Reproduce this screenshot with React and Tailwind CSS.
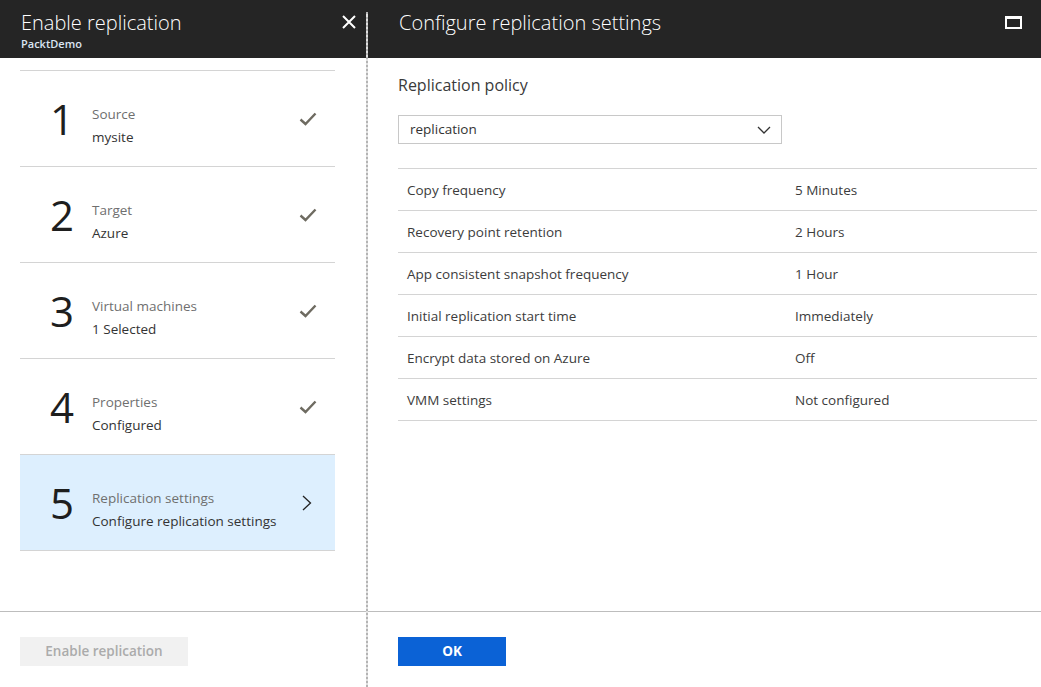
import { useState } from "react";

const steps = [
  { n: "1", title: "Source", sub: "mysite", done: true },
  { n: "2", title: "Target", sub: "Azure", done: true },
  { n: "3", title: "Virtual machines", sub: "1 Selected", done: true },
  { n: "4", title: "Properties", sub: "Configured", done: true },
  { n: "5", title: "Replication settings", sub: "Configure replication settings", done: false },
];

const settings = [
  ["Copy frequency", "5 Minutes"],
  ["Recovery point retention", "2 Hours"],
  ["App consistent snapshot frequency", "1 Hour"],
  ["Initial replication start time", "Immediately"],
  ["Encrypt data stored on Azure", "Off"],
  ["VMM settings", "Not configured"],
];

const font = { fontFamily: '"Open Sans", "Noto Sans", sans-serif' };

function Check() {
  return (
    <svg width="18" height="14" viewBox="0 0 18 14" fill="none">
      <path d="M1.5 7.5 L6.5 12 L16.5 1.5" stroke="#6e6b61" strokeWidth="2.4" />
    </svg>
  );
}

function Chevron() {
  return (
    <svg width="10" height="16" viewBox="0 0 10 16" fill="none">
      <path d="M1 1 L8.5 8 L1 15" stroke="#222" strokeWidth="1.3" />
    </svg>
  );
}

export default function App() {
  const [policy] = useState("replication");

  return (
    <div className="flex h-[687px] w-[1041px] overflow-hidden bg-white text-[#333]" style={font}>
      {/* left blade */}
      <div className="flex w-[366px] shrink-0 flex-col">
        <div className="flex h-[58px] shrink-0 items-start justify-between bg-[#252525] pl-[21px] pr-[10px]">
          <div>
            <div className="mt-[8px] text-[20px] font-light leading-[30px] text-white">Enable replication</div>
            <div className="-mt-[1px] text-[11px] font-semibold leading-[14px] text-[#dbe6f3]">PacktDemo</div>
          </div>
          <svg className="mt-[15px]" width="14" height="14" viewBox="0 0 14 14">
            <path d="M1 1 L13 13 M13 1 L1 13" stroke="#fff" strokeWidth="2" />
          </svg>
        </div>

        <div className="flex-1 px-[20px] pt-[12px]">
          <div className="w-[315px] border-t border-[#d4d4d4]">
            {steps.map((s) => (
              <div
                key={s.n}
                className={`flex h-[96px] items-center border-b border-[#d4d4d4] ${
                  s.done ? "" : "bg-[#ddeffe]"
                }`}
              >
                <div className="w-[72px] pl-[30px] text-[42px] font-normal leading-none text-[#1e1e1e]">{s.n}</div>
                <div className="flex-1 pt-[14px]">
                  <div className="text-[13.5px] leading-[22px] text-[#6f6f6f]">{s.title}</div>
                  <div className="mt-[1px] text-[13.5px] leading-[22px] text-[#333]">{s.sub}</div>
                </div>
                <div className="flex w-[46px] justify-start pl-[10px]">
                  {s.done ? <Check /> : <div className="pl-[3px]"><Chevron /></div>}
                </div>
              </div>
            ))}
          </div>
        </div>

        <div className="h-[76px] shrink-0 border-t border-[#bdbdbd] px-[20px] pt-[25px]">
          <button className="h-[29px] w-[168px] bg-[#f1f1f1] text-[13.5px] font-semibold text-[#ababab]">
            Enable replication
          </button>
        </div>
      </div>

      {/* divider */}
      <div className="flex w-[2px] shrink-0 flex-col">
        <div className="h-[12px] bg-[#252525]" />
        <div className="flex-1 border-l-2 border-dotted border-[#b4b4b4] bg-[#e0e0e0]" />
      </div>

      {/* right blade */}
      <div className="flex flex-1 flex-col">
        <div className="flex h-[58px] shrink-0 items-start justify-between bg-[#252525] pl-[31px] pr-[19px]">
          <div className="mt-[8px] text-[20px] font-light leading-[30px] text-white">Configure replication settings</div>
          <div className="mt-[16px] h-[13px] w-[17px] border-x-2 border-b-2 border-t-[3px] border-white" />
        </div>

        <div className="flex-1 pl-[30px] pr-[4px]">
          <div className="mt-[16px] text-[16px] leading-[22px] text-[#3a3a3a]">Replication policy</div>
          <div className="mt-[19px] flex h-[29px] w-[384px] items-center justify-between border border-[#c8c8c8] pl-[11px] pr-[10px]">
            <span className="text-[13.5px] text-[#333]">{policy}</span>
            <svg width="14" height="8" viewBox="0 0 14 8" fill="none">
              <path d="M1 1 L7 7 L13 1" stroke="#333" strokeWidth="1.3" />
            </svg>
          </div>

          <div className="mt-[24px] border-t border-[#d4d4d4]">
            {settings.map(([k, v]) => (
              <div key={k} className="flex h-[42px] items-center border-b border-[#d4d4d4] pt-[2px] text-[13.5px] text-[#3c3c3c]">
                <div className="w-[397px] pl-[9px]">{k}</div>
                <div>{v}</div>
              </div>
            ))}
          </div>
        </div>

        <div className="h-[76px] shrink-0 border-t border-[#bdbdbd] pl-[30px] pt-[25px]">
          <button className="h-[29px] w-[108px] bg-[#0b62d6] text-[13.5px] font-bold text-white">OK</button>
        </div>
      </div>
    </div>
  );
}
